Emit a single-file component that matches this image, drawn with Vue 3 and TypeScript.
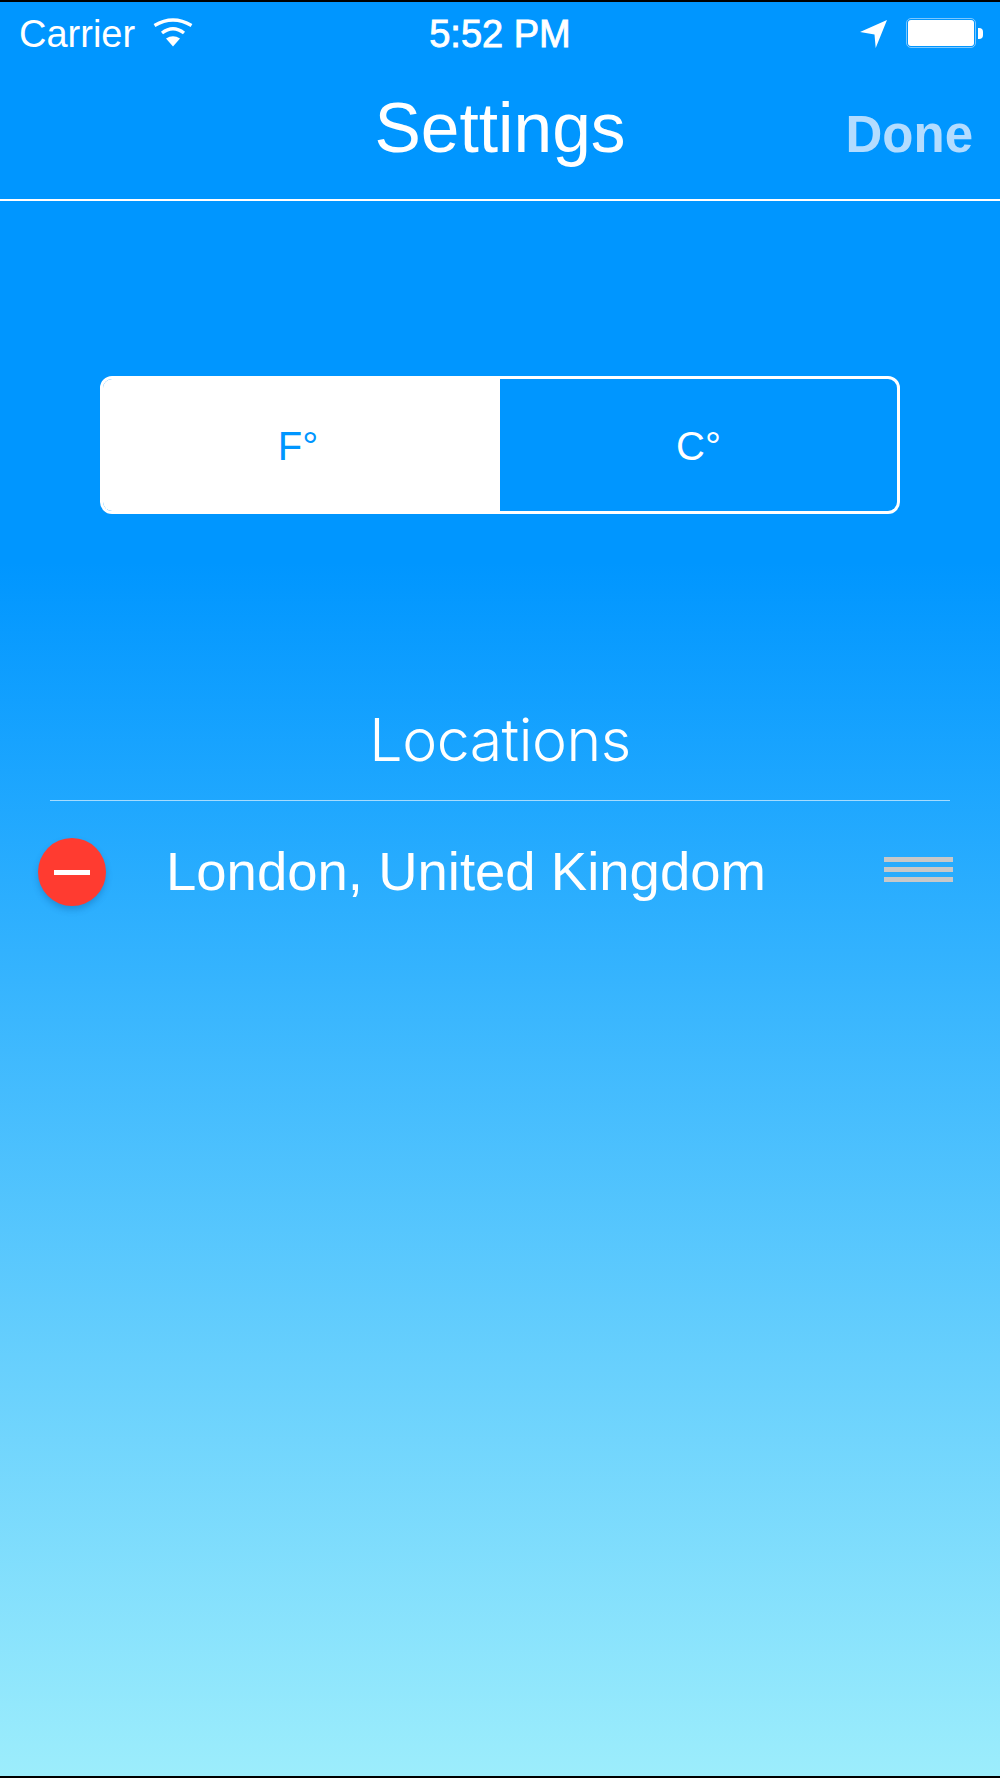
<template>
  <div class="screen">
    <div class="status-bar">
      <div class="status-left">
        <span class="carrier">Carrier</span>
        <svg class="wifi" width="40" height="30" viewBox="0 0 40 30">
          <path d="M13 20.5 Q20 16 27 20.5 L20 28.5 Z" fill="#fff" />
          <path d="M9 15 Q20 6.5 31 15" fill="none" stroke="#fff" stroke-width="3.4" />
          <path d="M1.5 7.5 Q20 -3.5 38.5 7.5" fill="none" stroke="#fff" stroke-width="3.4" />
        </svg>
      </div>
      <span class="time">5:52 PM</span>
      <div class="status-right">
        <svg class="arrow" width="28" height="28" viewBox="0 0 28 28">
          <path d="M0 12 L27 0 L15.7 28 L14.5 14.5 Z" fill="#fff" />
        </svg>
        <div class="battery"><div class="battery-fill"></div></div>
        <div class="battery-nub"></div>
      </div>
    </div>

    <header class="nav">
      <span></span>
      <h1 class="title">Settings</h1>
      <button class="done">Done</button>
    </header>

    <div class="units">
      <div
        v-for="unit in units"
        :key="unit"
        class="unit"
        :class="{ selected: unit === selectedUnit }"
      >
        {{ unit }}
      </div>
    </div>

    <h2 class="heading">Locations</h2>
    <div class="divider"></div>

    <div v-for="place in locations" :key="place" class="location">
      <div class="remove"><span class="minus"></span></div>
      <span class="place">{{ place }}</span>
      <div class="handle">
        <span></span>
        <span></span>
        <span></span>
      </div>
    </div>
  </div>
</template>

<script setup lang="ts">
import { ref } from "vue";

const units: string[] = ["F°", "C°"];
const selectedUnit = ref("F°");
const locations: string[] = ["London, United Kingdom"];
</script>

<style scoped>
.screen {
  box-sizing: border-box;
  height: 1778px;
  width: 1000px;
  overflow: hidden;
  border-top: 2px solid #000;
  border-bottom: 2px solid #000;
  background: linear-gradient(to bottom, #0096ff 0, #0096ff 560px, #9cedfc 1772px);
  color: #fff;
  font-family: "Liberation Sans", Arial, sans-serif;
}

.status-bar {
  display: flex;
  align-items: center;
  justify-content: space-between;
  height: 64px;
  padding: 0 17px 0 19px;
  position: relative;
}

.status-left {
  display: flex;
  align-items: center;
  gap: 18px;
  font-size: 38px;
}

.wifi {
  margin-top: -2px;
}

.time {
  position: absolute;
  left: 0;
  right: 0;
  text-align: center;
  font-size: 38px;
  -webkit-text-stroke: 0.9px #fff;
}

.status-right {
  display: flex;
  align-items: center;
  margin-bottom: 2px;
}

.arrow {
  margin: 2px 18px 0 0;
}

.battery {
  box-sizing: border-box;
  width: 70px;
  height: 30px;
  padding: 1px;
  border: 1.5px solid #7cc7ff;
  border-radius: 5px;
}

.battery-fill {
  height: 100%;
  background: #fff;
  border-radius: 3px;
}

.battery-nub {
  width: 5px;
  height: 11px;
  margin-left: 2px;
  background: #fff;
  border-radius: 0 4px 4px 0;
}

.nav {
  display: grid;
  grid-template-columns: 1fr auto 1fr;
  align-items: baseline;
  height: 135px;
  padding: 22px 27px 0;
  box-sizing: border-box;
  border-bottom: 2px solid #fff;
}

.title {
  margin: 0;
  font-size: 69.5px;
  font-weight: 400;
  line-height: 80px;
}

.done {
  justify-self: end;
  padding: 0;
  border: none;
  background: none;
  color: #b3dcff;
  font-family: inherit;
  font-size: 51px;
  font-weight: 700;
}

.units {
  display: flex;
  box-sizing: border-box;
  width: 800px;
  height: 138px;
  margin: 175px auto 0;
  border: 3px solid #fff;
  border-radius: 12px;
  overflow: hidden;
}

.unit {
  flex: 0 0 50%;
  box-sizing: border-box;
  display: flex;
  align-items: center;
  justify-content: center;
  padding-top: 2px;
  font-size: 40px;
}

.unit.selected {
  background: #fff;
  color: #0096ff;
  padding-right: 7px;
}

.heading {
  margin: 190px 0 0;
  text-align: center;
  font-family: Inter, "Liberation Sans", sans-serif;
  font-size: 59px;
  font-weight: 300;
  letter-spacing: -0.5px;
  line-height: 72px;
}

.divider {
  height: 1px;
  margin: 24px 50px 0;
  background: rgba(255, 255, 255, 0.6);
}

.location {
  display: flex;
  align-items: center;
  margin-top: 37px;
  padding: 0 47px 0 38px;
}

.remove {
  display: flex;
  align-items: center;
  justify-content: center;
  width: 68px;
  height: 68px;
  border-radius: 50%;
  background: #ff3b30;
  box-shadow: 0 4px 6px rgba(0, 60, 120, 0.25);
}

.minus {
  width: 36px;
  height: 5px;
  background: #fff;
}

.place {
  flex: 1;
  margin: -2px 0 0 60px;
  font-size: 54.5px;
}

.handle {
  display: flex;
  flex-direction: column;
  gap: 5.5px;
  width: 69px;
  margin-top: -5px;
}

.handle span {
  height: 4.5px;
  background: #c8c8c8;
}
</style>
